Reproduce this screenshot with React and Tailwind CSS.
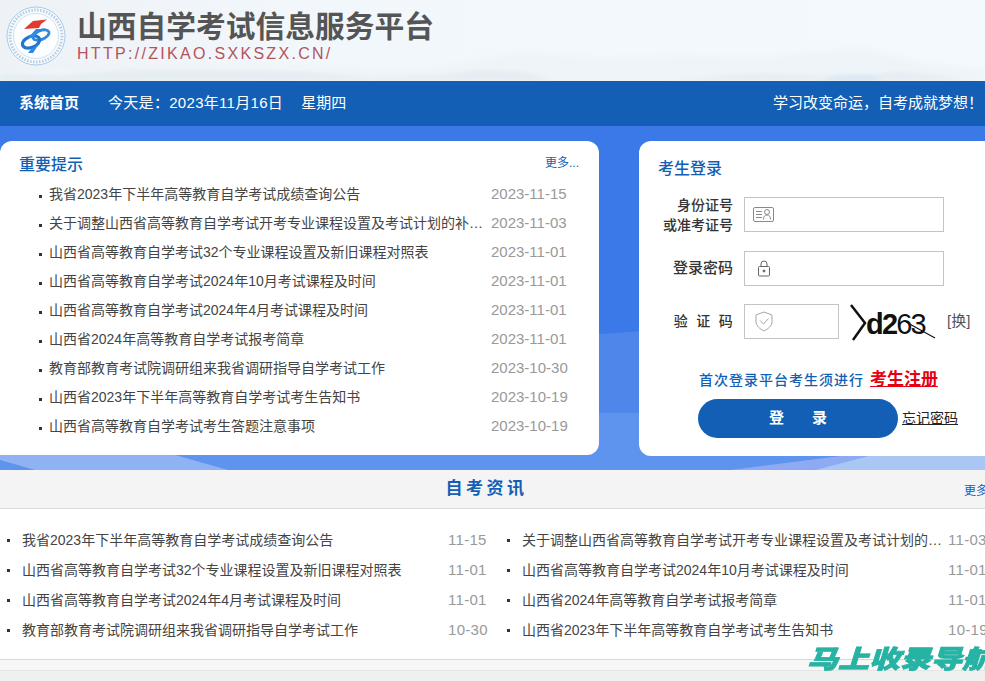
const cjk = "font-['Liberation_Sans','Noto_Sans_CJK_SC',sans-serif]";

const notices = [
  ['我省2023年下半年高等教育自学考试成绩查询公告', '2023-11-15'],
  ['关于调整山西省高等教育自学考试开考专业课程设置及考试计划的补充通知', '2023-11-03'],
  ['山西省高等教育自学考试32个专业课程设置及新旧课程对照表', '2023-11-01'],
  ['山西省高等教育自学考试2024年10月考试课程及时间', '2023-11-01'],
  ['山西省高等教育自学考试2024年4月考试课程及时间', '2023-11-01'],
  ['山西省2024年高等教育自学考试报考简章', '2023-11-01'],
  ['教育部教育考试院调研组来我省调研指导自学考试工作', '2023-10-30'],
  ['山西省2023年下半年高等教育自学考试考生告知书', '2023-10-19'],
  ['山西省高等教育自学考试考生答题注意事项', '2023-10-19'],
];

const news = [
  ['我省2023年下半年高等教育自学考试成绩查询公告', '11-15'],
  ['关于调整山西省高等教育自学考试开考专业课程设置及考试计划的补充通知', '11-03'],
  ['山西省高等教育自学考试32个专业课程设置及新旧课程对照表', '11-01'],
  ['山西省高等教育自学考试2024年10月考试课程及时间', '11-01'],
  ['山西省高等教育自学考试2024年4月考试课程及时间', '11-01'],
  ['山西省2024年高等教育自学考试报考简章', '11-01'],
  ['教育部教育考试院调研组来我省调研指导自学考试工作', '10-30'],
  ['山西省2023年下半年高等教育自学考试考生告知书', '10-19'],
];

// logo drawn in page coordinates of the 72x72 corner
const Logo = () => (
  <svg width="72" height="72" viewBox="0 0 72 72" className="shrink-0">
    <circle cx="36" cy="36" r="29" fill="#f7fbfe" stroke="#a8cbe8" strokeWidth="1" />
    <circle cx="36" cy="36" r="26" fill="none" stroke="#9cb6d6" strokeWidth="3" strokeDasharray="1.5 1.5" opacity="0.7" />
    <circle cx="36" cy="36" r="22.5" fill="#fcfeff" stroke="#c3dbef" strokeWidth="0.8" />
    <path d="M24 29 L33 21 L47 19.5 L41 24 L39 28 Z" fill="#e23a2e" />
    <ellipse cx="41" cy="35" rx="8.5" ry="4.5" transform="rotate(-22 41 35)" fill="none" stroke="#2f8ae0" strokeWidth="2.8" />
    <ellipse cx="31" cy="42" rx="9" ry="5.5" transform="rotate(-22 31 42)" fill="none" stroke="#1f76cf" strokeWidth="3.2" />
    <path d="M36 29 L42 29 L33 38 L28 38 Z" fill="#2f8ae0" />
    <path d="M31 49 L39 44 L33 53 L28 53 Z" fill="#2f8ae0" />
  </svg>
);

const Mountains = () => (
  <svg width="985" height="81" viewBox="0 0 985 81" className="absolute left-0 top-0 blur-[2px]">
    <path d="M0 90V72L60 68L130 70L200 66L300 66L420 70L520 52L600 58L680 56L770 56L860 48L930 64L985 70V90Z" fill="#eef4f8" />
    <path d="M0 90V74L60 76L130 70L210 70L300 72L370 78L440 76L480 70L520 72L560 82H640L760 74L850 78L900 72L985 82V90Z" fill="#e5ecf2" />
    <path d="M810 84L835 76L870 75L890 84Z" fill="#d6e4f0" />
  </svg>
);

// the lighter bands behind the two panels
const BandShapes = () => (
  <svg width="985" height="344" viewBox="0 0 985 344" className="absolute left-0 top-0">
    <path d="M0 252L985 180V344H0Z" fill="#4f86e9" />
    <path d="M0 287H985V344H0Z" fill="#5e93ee" />
    <path d="M0 329H175L228 344H35L0 334Z" fill="#8fb2f2" />
    <path d="M730 344L840 330H868L815 344Z" fill="#8daaf2" />
    <path d="M815 344L868 330H985V344Z" fill="#a9c6f5" />
  </svg>
);

const CardIcon = () => (
  <svg width="21" height="15" viewBox="0 0 21 15" fill="none" stroke="#8a8a8a" strokeWidth="1">
    <rect x="0.5" y="0.5" width="20" height="14" rx="1.5" />
    <path d="M3 4.5h6M3 7.5h6M3 10.5h6" />
    <circle cx="14" cy="5" r="2.5" />
    <path d="M10.5 12.5c0-3 1.2-4.5 3.5-4.5s3.5 1.500 3.500 4.500" />
  </svg>
);

const LockIcon = () => (
  <svg width="14" height="17" viewBox="0 0 14 17" fill="none" stroke="#666" strokeWidth="1">
    <rect x="1.500" y="6.500" width="11" height="9.500" rx="1" />
    <path d="M4 6.500V4a3 3 0 0 1 6 0v2.500" />
    <circle cx="7" cy="11" r="1" fill="#666" />
  </svg>
);

const ShieldIcon = () => (
  <svg width="18" height="21" viewBox="0 0 18 21" fill="none" stroke="#a6a6a6" strokeWidth="1">
    <path d="M9 1L17 4V10.500C17 15 13 18 9 20C5 18 1 15 1 10.500V4Z" />
    <path d="M5 9.500L8.500 13L13.500 7.500" />
  </svg>
);

const Captcha = () => (
  <svg width="88" height="38" viewBox="0 0 88 38" className="shrink-0">
    <text x="16" y="30.500" fontFamily="Liberation Sans, sans-serif" fontSize="29" fill="#111" letterSpacing="-1.800">
      <tspan fontWeight="700">d2</tspan>
      <tspan>63</tspan>
    </text>
    <path d="M1 2L15 20L3 37" stroke="#111" strokeWidth="2.500" fill="none" />
    <path d="M56 19L85 35" stroke="#111" strokeWidth="1.200" />
  </svg>
);

const Field = ({ children, className }) => (
  <div className={`flex items-center h-[35px] bg-white border border-[#c4c4c4] ${className}`}>{children}</div>
);

export default function App() {
  return (
    <div className={`relative w-[985px] h-[681px] overflow-hidden bg-[#f0f0f0] ${cjk}`}>
      {/* header */}
      <div className="relative h-[81px] overflow-hidden bg-[linear-gradient(90deg,#eef2f6_0%,#f2f7fb_30%,#f3f9fd_100%)]">
        <Mountains />
        <div className="relative flex items-start h-full">
          <Logo />
          <div className="pl-[5px] pt-[10px]">
            <div className="text-[29.75px] leading-[34px] font-bold text-[#555]">山西自学考试信息服务平台</div>
            <div className="text-[16px] leading-[18px] mt-[1px] text-[#b3545c] tracking-[2.3px]">HTTP://ZIKAO.SXKSZX.CN/</div>
          </div>
        </div>
      </div>

      {/* nav */}
      <div className="h-[45px] flex items-center bg-[#125fb5] text-white text-[15px] pl-[19px] pr-[2px]">
        <span className="font-bold w-[89px]">系统首页</span>
        <span className="tracking-[0.3px]">今天是：2023年11月16日</span>
        <span className="ml-[18px]">星期四</span>
        <span className="ml-auto">学习改变命运，自考成就梦想！</span>
      </div>

      {/* main panels */}
      <div className="relative h-[344px] bg-[#3b79e9]">
        <BandShapes />
        <div className="relative flex items-start justify-between pt-[15px]">
          <div className="w-[599px] h-[314px] bg-white rounded-r-[12px] rounded-tl-[12px] pl-[19px] pr-[20px] pt-[12px]">
            <div className="flex items-center justify-between h-[24px]">
              <span className="text-[16px] font-medium text-[#125fb5]">重要提示</span>
              <span className="text-[12px] text-[#125fb5] -mt-[4px]">更多...</span>
            </div>
            <ul className="mt-[3px]">
              {notices.map(([title, date]) => (
                <li key={title} className="flex items-center h-[29px] text-[14px] text-[#444]">
                  <span className="w-[3px] h-[3px] bg-[#333] ml-[20px] mr-[7px] mt-[4px] shrink-0" />
                  <span className="w-[435px] truncate">{title}</span>
                  <span className="ml-[7px] text-[15px] text-[#999]">{date}</span>
                </li>
              ))}
            </ul>
          </div>

          <div className="w-[346px] h-[315px] bg-white rounded-l-[12px] pl-[19px] pt-[16px]">
            <div className="text-[16px] leading-[24px] font-medium text-[#125fb5]">考生登录</div>
            <div className="mt-[16px] h-[35px] flex items-center">
              <div className="w-[75px] text-right text-[14px] leading-[20px] font-medium text-[#333]">身份证号<br />或准考证号</div>
              <Field className="w-[200px] ml-[11px] pl-[8px]"><CardIcon /></Field>
            </div>
            <div className="mt-[19px] h-[35px] flex items-center">
              <div className="w-[75px] text-right text-[15px] font-medium text-[#333]">登录密码</div>
              <Field className="w-[200px] ml-[11px] pl-[12px]"><LockIcon /></Field>
            </div>
            <div className="mt-[18px] h-[35px] flex items-center">
              <div className="w-[77px] text-right text-[14px] font-medium text-[#333] tracking-[2.3px]">验 证 码</div>
              <Field className="w-[95px] ml-[9px] pl-[10px]"><ShieldIcon /></Field>
              <div className="ml-[11px]"><Captcha /></div>
              <span className="ml-[9px] text-[15px] text-[#555]">[换]</span>
            </div>
            <div className="mt-[30px] h-[22px] pl-[41px] flex items-center text-[14px] text-[#125fb5] font-medium tracking-[1px]">
              首次登录平台考生须进行
              <a className="ml-[6px] text-[17px] font-bold tracking-normal text-[#e60012] underline">考生注册</a>
            </div>
            <div className="mt-[8px] pl-[40px] flex items-center">
              <div className="w-[200px] h-[39px] rounded-full bg-[#125fb5] text-white text-[15px] font-bold flex items-center justify-center gap-[28px]">
                <span>登</span><span>录</span>
              </div>
              <a className="ml-[4px] text-[14px] text-[#222] underline">忘记密码</a>
            </div>
          </div>
        </div>
      </div>

      {/* news */}
      <div className="relative h-[39px] flex items-center justify-center pr-[12px] bg-[#f4f4f5] border-b border-[#dcdcdc]">
        <span className="text-[17px] font-bold text-[#125fb5] tracking-[3.5px]">自考资讯</span>
        <span className="absolute left-[964px] top-[12px] text-[12px] text-[#125fb5] whitespace-nowrap">更多...</span>
      </div>
      <div className="h-[151px] bg-white border-b border-[#d8d8d8] pt-[16px] pl-[7px] grid grid-cols-[500px_500px] grid-rows-[30px_30px_30px_30px]">
        {news.map(([title, date]) => (
          <div key={title} className="flex items-center text-[14px] text-[#444] whitespace-nowrap">
            <span className="w-[3px] h-[3px] bg-[#333] mr-[12px] shrink-0" />
            <span className="w-[421px] truncate">{title}</span>
            <span className="ml-[5px] text-[15px] tracking-[0.3px] text-[#999]">{date}</span>
          </div>
        ))}
      </div>
      <div className="h-[11px] bg-[#f7f7f7] border-b border-[#e4e4e4]" />

      {/* watermark */}
      <div className="absolute left-[807px] top-[647px] origin-left scale-x-[1.24] text-[25px] leading-[25px] font-black italic text-[#27b3a4] [-webkit-text-stroke:0.8px_#27b3a4] whitespace-nowrap">马上收录导航</div>
    </div>
  );
}
